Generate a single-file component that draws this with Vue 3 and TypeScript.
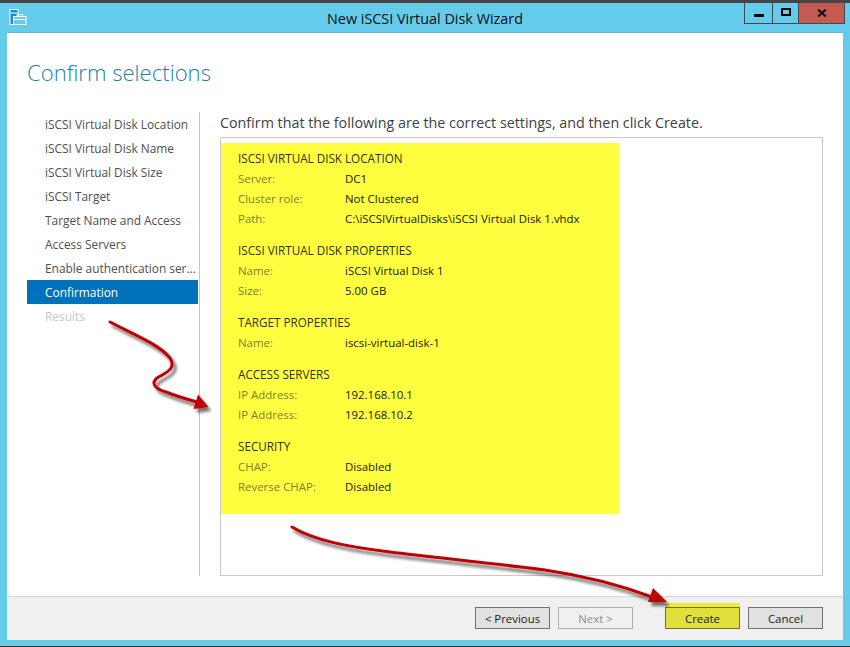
<script setup lang="ts">
interface Row { label: string; value: string }
interface Section { title: string; rows: Row[] }

const steps: string[] = [
  'iSCSI Virtual Disk Location',
  'iSCSI Virtual Disk Name',
  'iSCSI Virtual Disk Size',
  'iSCSI Target',
  'Target Name and Access',
  'Access Servers',
  'Enable authentication ser...',
  'Confirmation',
  'Results',
]

const sections: Section[] = [
  {
    title: 'ISCSI VIRTUAL DISK LOCATION',
    rows: [
      { label: 'Server:', value: 'DC1' },
      { label: 'Cluster role:', value: 'Not Clustered' },
      { label: 'Path:', value: 'C:\\iSCSIVirtualDisks\\iSCSI Virtual Disk 1.vhdx' },
    ],
  },
  {
    title: 'ISCSI VIRTUAL DISK PROPERTIES',
    rows: [
      { label: 'Name:', value: 'iSCSI Virtual Disk 1' },
      { label: 'Size:', value: '5.00 GB' },
    ],
  },
  {
    title: 'TARGET PROPERTIES',
    rows: [{ label: 'Name:', value: 'iscsi-virtual-disk-1' }],
  },
  {
    title: 'ACCESS SERVERS',
    rows: [
      { label: 'IP Address:', value: '192.168.10.1' },
      { label: 'IP Address:', value: '192.168.10.2' },
    ],
  },
  {
    title: 'SECURITY',
    rows: [
      { label: 'CHAP:', value: 'Disabled' },
      { label: 'Reverse CHAP:', value: 'Disabled' },
    ],
  },
]
</script>

<template>
  <div class="window">
    <header class="titlebar">
      <svg class="app-icon" width="18" height="17" viewBox="0 0 18 17">
        <rect x="1" y="0.5" width="8" height="15" fill="#1e88d8" stroke="#fff" />
        <rect x="2" y="3.5" width="6" height="1" fill="#fff" />
        <rect x="4.5" y="7.5" width="12.5" height="8" fill="#65cbeb" stroke="#fff" />
        <path d="M8 7.5V5.5h5.5v2" fill="none" stroke="#fff" />
        <path d="M4.5 10.5h12.5" stroke="#fff" />
      </svg>
      <span class="title">New iSCSI Virtual Disk Wizard</span>
      <div class="controls">
        <div class="ctl ctl-min"><i class="glyph-min"></i></div>
        <div class="ctl ctl-max"><i class="glyph-max"></i></div>
        <div class="ctl ctl-close">
          <svg width="10" height="8" viewBox="0 0 10 8">
            <path d="M1 0.5 9 7.5M9 0.5 1 7.5" stroke="#111" stroke-width="2.2" />
          </svg>
        </div>
      </div>
    </header>

    <main class="client">
      <h1 class="heading">Confirm selections</h1>
      <div class="body">
        <nav class="steps">
          <div
            v-for="s in steps"
            :key="s"
            class="step"
            :class="{ active: s === 'Confirmation', disabled: s === 'Results' }"
          >{{ s }}</div>
        </nav>
        <section class="pane">
          <p class="intro">Confirm that the following are the correct settings, and then click Create.</p>
          <div class="box">
            <div class="summary">
              <div v-for="sec in sections" :key="sec.title" class="group">
                <div class="group-title">{{ sec.title }}</div>
                <div v-for="(r, i) in sec.rows" :key="i" class="row">
                  <span class="label">{{ r.label }}</span>
                  <span class="value">{{ r.value }}</span>
                </div>
              </div>
            </div>
          </div>
        </section>
      </div>
      <footer class="footer">
        <button class="btn btn-prev">&lt; Previous</button>
        <button class="btn btn-next">Next &gt;</button>
        <button class="btn btn-create">Create</button>
        <button class="btn btn-cancel">Cancel</button>
      </footer>
    </main>

    <svg class="arrows" width="850" height="647" viewBox="0 0 850 647">
      <defs>
        <filter id="sh" x="-20%" y="-20%" width="140%" height="140%">
          <feGaussianBlur in="SourceAlpha" stdDeviation="1.8" />
          <feOffset dx="3" dy="4" />
          <feComponentTransfer><feFuncA type="linear" slope="0.55" /></feComponentTransfer>
          <feMerge>
            <feMergeNode />
            <feMergeNode in="SourceGraphic" />
          </feMerge>
        </filter>
      </defs>
      <g filter="url(#sh)">
        <path
          d="M110 322C135 335 160 345 170 358C177 369 165 373 157 378C150 384 156 389 166 392C176 396 186 399 197 402"
          fill="none"
          stroke="#c00000"
          stroke-width="3"
          stroke-linecap="round"
        />
        <path d="M198 394.5 208.5 407 193.5 409Z" fill="#c00000" />
      </g>
      <g filter="url(#sh)">
        <path
          d="M292 527C315 541 350 547 390 552C440 558 500 564 545 570C585 576 620 585 652 597"
          fill="none"
          stroke="#c00000"
          stroke-width="3"
          stroke-linecap="round"
        />
        <path d="M653 588 667 602 648 602Z" fill="#c00000" />
      </g>
    </svg>
  </div>
</template>

<style>
html,
body {
  margin: 0;
  padding: 0;
}
</style>

<style scoped>
.window {
  position: relative;
  width: 850px;
  height: 647px;
  box-sizing: border-box;
  display: flex;
  flex-direction: column;
  background: #65cbeb;
  border-top: 3px solid #444444;
  border-bottom: 1px solid #333333;
  padding: 0 7px 6px;
  font-family: "Open Sans", "Noto Sans", sans-serif;
  overflow: hidden;
}
.titlebar {
  height: 29px;
  flex: none;
  position: relative;
  display: flex;
  justify-content: center;
  align-items: center;
}
.app-icon {
  position: absolute;
  left: 2px;
  top: 6px;
}
.title {
  font-size: 14.4px;
  color: #101010;
  margin-top: 1px;
}
.controls {
  position: absolute;
  top: 0;
  left: 737px;
  height: 20px;
  display: flex;
  border: 1px solid #3a4a50;
  border-top: 0;
  box-sizing: content-box;
}
.ctl {
  height: 20px;
  display: flex;
  align-items: center;
  justify-content: center;
}
.ctl-min {
  width: 27px;
  border-right: 1px solid #3a4a50;
}
.ctl-max {
  width: 25px;
  border-right: 1px solid #3a4a50;
}
.ctl-close {
  width: 45px;
  background: #c65a50;
}
.glyph-min {
  display: block;
  width: 10px;
  height: 3px;
  background: #000;
  margin-top: 5px;
}
.glyph-max {
  display: block;
  width: 6px;
  height: 4px;
  border: 2px solid #000;
  margin-top: -3px;
}
.client {
  flex: 1;
  min-height: 0;
  display: flex;
  flex-direction: column;
  background: #ffffff;
  border-top: 1px solid #7fb0c8;
}
.heading {
  margin: 0;
  height: 79px;
  box-sizing: border-box;
  padding: 23px 0 0 20px;
  font-family: "Open Sans", sans-serif;
  font-weight: 300;
  font-size: 22.1px;
  line-height: 32px;
  color: #1b7fae;
}
.body {
  flex: 1;
  min-height: 0;
  display: flex;
  padding: 0 20px 20px;
}
.steps {
  width: 172px;
  flex: none;
  border-right: 1px solid #c4c4c4;
  box-sizing: content-box;
}
.step {
  height: 24px;
  width: 171px;
  box-sizing: border-box;
  padding-left: 18px;
  line-height: 25px;
  font-size: 11.9px;
  color: #505050;
  white-space: nowrap;
}
.step.active {
  background: #0072bc;
  color: #ffffff;
}
.step.disabled {
  color: #c8c8c8;
}
.pane {
  flex: 1;
  min-width: 0;
  display: flex;
  flex-direction: column;
  padding-left: 20px;
}
.intro {
  margin: 0;
  height: 25px;
  font-size: 14.3px;
  line-height: 22px;
  color: #404040;
  white-space: nowrap;
}
.box {
  flex: 1;
  min-height: 0;
  border: 1px solid #c8c8c8;
  padding: 5px 0 0;
}
.summary {
  width: 398px;
  height: 371px;
  box-sizing: border-box;
  padding: 5px 0 0 17px;
  background: #ffff40;
}
.group {
  margin-bottom: 12px;
}
.group-title,
.row {
  height: 20px;
  white-space: nowrap;
}
.group-title {
  line-height: 20px;
  font-size: 11.7px;
  color: #303010;
}
.row {
  display: flex;
  line-height: 22px;
  font-size: 11.45px;
}
.label {
  width: 107px;
  flex: none;
  color: #808030;
}
.value {
  color: #201800;
}
.footer {
  flex: none;
  height: 44px;
  box-sizing: border-box;
  background: #f0f0f0;
  border-top: 1px solid #d8d8d8;
  display: flex;
  align-items: flex-start;
  padding: 10px 20px 0 0;
  justify-content: flex-end;
  gap: 8px;
}
.btn {
  width: 75px;
  height: 22px;
  box-sizing: border-box;
  padding: 0;
  font-family: inherit;
  font-size: 11.4px;
  color: #202020;
  background: #e1e1e1;
  border: 1px solid #707070;
  border-radius: 0;
}
.btn-next {
  color: #8c8c8c;
  background: #f0f0f0;
  border-color: #adadad;
}
.btn-create {
  margin-left: 24px;
  background: #e0e03c;
  border-color: #70702a;
  box-shadow: 0 -4px 0 #eeee30;
}
.arrows {
  position: absolute;
  left: 0;
  top: -3px;
  pointer-events: none;
}
</style>
